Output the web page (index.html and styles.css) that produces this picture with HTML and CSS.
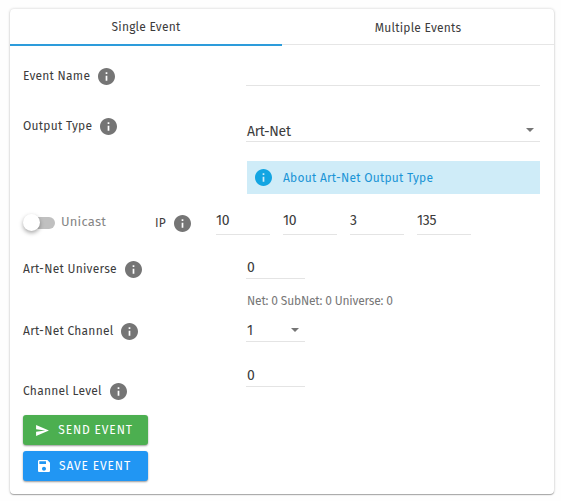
FILE: index.html
```
<!DOCTYPE html>
<html lang="en">
<head>
  <meta charset="UTF-8">
  <meta name="viewport" content="width=device-width, initial-scale=1.0">
  <title>Events</title>
  <link rel="stylesheet" href="styles.css">
</head>
<body>
  <svg class="defs">
    <symbol id="info" viewBox="2 2 20 20">
      <path d="M12 2C6.48 2 2 6.48 2 12s4.48 10 10 10 10-4.48 10-10S17.52 2 12 2zm1 15h-2v-6h2v6zm0-8h-2V7h2v2z"/>
    </symbol>
    <symbol id="arrow" viewBox="7 10 10 5">
      <path d="M7 10l5 5 5-5z"/>
    </symbol>
  </svg>

  <div class="card">
    <nav class="tabs">
      <a class="tab active">Single Event</a>
      <a class="tab">Multiple Events</a>
    </nav>

    <form class="form">
      <div class="row name">
        <label class="label">Event Name<svg class="info"><use href="#info"/></svg></label>
        <div class="field"></div>
      </div>

      <div class="row output">
        <label class="label">Output Type<svg class="info"><use href="#info"/></svg></label>
        <div class="field select">Art-Net<svg class="arrow"><use href="#arrow"/></svg></div>
      </div>

      <div class="alert"><svg class="info"><use href="#info"/></svg>About Art-Net Output Type</div>

      <div class="ip-row">
        <div class="switch"><span class="thumb"></span><span class="track"></span></div>
        <span class="unicast">Unicast</span>
        <label class="label ip-label">IP<svg class="info"><use href="#info"/></svg></label>
        <div class="ip">
          <div class="field">10</div>
          <div class="field">10</div>
          <div class="field">3</div>
          <div class="field">135</div>
        </div>
      </div>

      <div class="row universe">
        <label class="label">Art-Net Universe<svg class="info"><use href="#info"/></svg></label>
        <div class="field small">0</div>
      </div>
      <div class="hint">Net: 0 SubNet: 0 Universe: 0</div>

      <div class="row channel">
        <label class="label">Art-Net Channel<svg class="info"><use href="#info"/></svg></label>
        <div class="field small select">1<svg class="arrow"><use href="#arrow"/></svg></div>
      </div>

      <div class="row level">
        <label class="label">Channel Level<svg class="info"><use href="#info"/></svg></label>
        <div class="field small">0</div>
      </div>

      <div class="actions">
        <button type="button" class="btn send">
          <svg class="send-icon" viewBox="2 3 21 18"><path d="M2.01 21L23 12 2.01 3 2 10l15 2-15 2z"/></svg>
          SEND EVENT
        </button>
        <button type="button" class="btn save">
          <svg class="save-icon" viewBox="3 3 18 18"><path d="M17 3H5c-1.11 0-2 .9-2 2v14c0 1.1.89 2 2 2h14c1.1 0 2-.9 2-2V7l-4-4zm-5 16c-1.66 0-3-1.34-3-3s1.34-3 3-3 3 1.34 3 3-1.34 3-3 3zm3-10H5V5h10v4z"/></svg>
          SAVE EVENT
        </button>
      </div>
    </form>
  </div>
</body>
</html>
```
FILE: styles.css
```
* {
  box-sizing: border-box;
}

body {
  margin: 0;
  padding: 9px 7px 7px 10px;
  background: #fefefe;
  font-family: "Fira Sans", "Noto Sans", sans-serif;
  font-size: 12px;
  color: #3c3c3c;
}

.defs {
  display: none;
}

.card {
  width: 544px;
  height: 485px;
  background: #fff;
  border-radius: 4px;
  box-shadow: 0 1px 1px rgba(0, 0, 0, 0.3), 0 0 3px rgba(0, 0, 0, 0.2);
}

.tabs {
  display: flex;
  height: 37px;
}

.tab {
  flex: 1;
  height: 36px;
  border-bottom: 1px solid #e6e6e6;
  text-align: center;
  line-height: 38px;
  letter-spacing: 0.22px;
}

.tab.active {
  height: 37px;
  border-bottom: 2px solid #2d9cdb;
  line-height: 36px;
}

.form {
  padding: 0 14px 0 13px;
}

.row {
  display: grid;
  grid-template-columns: 223px 1fr;
  align-items: end;
}

.label {
  display: flex;
  align-items: center;
  gap: 8px;
  height: 18px;
  letter-spacing: 0.25px;
  white-space: nowrap;
}

.info {
  flex: none;
  width: 17px;
  height: 17px;
  fill: #757575;
}

.field {
  height: 29px;
  padding-left: 1px;
  border-bottom: 1px solid #e4e4e4;
  font-size: 14px;
  line-height: 22px;
  letter-spacing: -0.3px;
}

.field.small {
  width: 59px;
}

.select {
  display: flex;
  justify-content: space-between;
}

.arrow {
  width: 8px;
  height: 4px;
  margin: 8px 6px 0 0;
  fill: #757575;
}

.name {
  height: 40px;
}

.name .label {
  margin-bottom: 1px;
}

.output {
  height: 56px;
}

.output .label {
  margin-bottom: 7px;
}

.output .field {
  height: 22px;
  line-height: 23px;
}

.alert {
  display: flex;
  align-items: center;
  gap: 11px;
  height: 33px;
  margin: 19px 0 0 224px;
  padding-left: 8px;
  background: #cfecf8;
  color: #1a94d6;
  letter-spacing: 0.23px;
}

.alert .info {
  fill: #13a5e2;
}

.ip-row {
  display: flex;
  align-items: end;
  height: 41px;
}

.switch {
  display: flex;
  align-items: center;
  width: 32px;
  height: 17px;
  margin-bottom: 4px;
}

.track {
  width: 15px;
  height: 12px;
  background: #c0c0c0;
  border-radius: 0 6px 6px 0;
}

.thumb {
  z-index: 1;
  width: 17px;
  height: 17px;
  background: #fff;
  border-radius: 50%;
  box-shadow: 0 2px 4px rgba(0, 0, 0, 0.35);
}

/* let the track run under the knob */
.thumb + .track {
  width: 24px;
  margin-left: -9px;
}

.unicast {
  width: 94px;
  height: 20px;
  margin: 0 0 3px 6px;
  line-height: 20px;
  font-size: 13px;
  letter-spacing: 0.2px;
  color: #858585;
}

.ip-label {
  width: 61px;
  margin-bottom: 3px;
}

.ip {
  display: flex;
  gap: 13px;
}

.ip .field {
  width: 54px;
  height: 25px;
  padding-left: 0;
}

.universe {
  height: 44px;
}

.universe .label {
  margin-bottom: 1px;
}

.universe .field,
.level .field {
  height: 22px;
}

.hint {
  height: 20px;
  margin: 12px 0 0 224px;
  line-height: 20px;
  letter-spacing: -0.18px;
  color: #777;
}

.channel {
  height: 31px;
}

.channel .label {
  margin-bottom: 2px;
}

.channel .field {
  height: 22px;
}

.level {
  height: 58px;
}

.level .field {
  margin-bottom: 13px;
}

.actions {
  display: flex;
  flex-direction: column;
  gap: 6px;
  width: 125px;
  margin-top: 15px;
}

.btn {
  display: flex;
  align-items: center;
  justify-content: center;
  gap: 9px;
  height: 30px;
  padding: 0 2px 0 0;
  border: none;
  border-radius: 3px;
  background: #4caf50;
  box-shadow: 0 1px 2px rgba(0, 0, 0, 0.4);
  color: #fff;
  font: 400 12px "Fira Sans", "Noto Sans", sans-serif;
  letter-spacing: 0.85px;
  white-space: nowrap;
}

.save {
  background: #2196f3;
}

.btn svg {
  fill: #fff;
}

.send-icon {
  width: 13px;
  height: 11px;
}

.save-icon {
  width: 12px;
  height: 12px;
}
```
